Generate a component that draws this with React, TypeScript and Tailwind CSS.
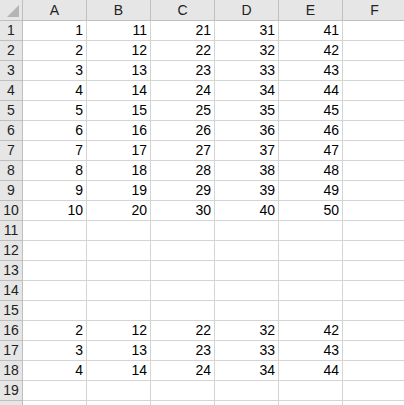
import React from 'react';

const cols = ['A', 'B', 'C', 'D', 'E', 'F'];

// values per row (null = empty row)
const rows: (number[] | null)[] = [];
for (let i = 1; i <= 10; i++) rows.push([i, 10 + i, 20 + i, 30 + i, 40 + i]);
for (let i = 11; i <= 15; i++) rows.push(null);
for (let i = 2; i <= 4; i++) rows.push([i, 10 + i, 20 + i, 30 + i, 40 + i]);
rows.push(null);
rows.push(null);

const App = () => {
  return (
    <div
      className="w-[404px] h-[405px] overflow-hidden bg-white text-[15px] text-black"
      style={{ fontFamily: '"Liberation Sans", Arial, sans-serif' }}
    >
      <div className="grid grid-cols-[23px_64px_64px_64px_64px_64px_64px]">
        {/* Header row */}
        <div className="h-[21px] bg-[#e6e6e6] border-r border-b border-[#bfbfbf] relative">
          <div className="absolute right-[3px] bottom-[3px] w-0 h-0 border-l-[12px] border-l-transparent border-b-[12px] border-b-[#b4b4b4]" />
        </div>
        {cols.map((c) => (
          <div
            key={c}
            className="h-[21px] bg-[#e6e6e6] border-r border-b border-[#bfbfbf] flex items-center justify-center text-[14px] text-[#222]"
          >
            {c}
          </div>
        ))}

        {/* Body rows */}
        {rows.map((vals, r) => (
          <React.Fragment key={r}>
            <div className="h-[20px] bg-[#e6e6e6] border-r border-b border-[#bfbfbf] flex items-center justify-center text-[14px] text-[#222]">
              {r < 19 ? r + 1 : ''}
            </div>
            {cols.map((c, ci) => (
              <div
                key={c}
                className="h-[20px] border-r border-b border-[#d4d4d4] flex items-center justify-end pr-[3px] text-[14px]"
              >
                {vals && ci < 5 ? vals[ci] : ''}
              </div>
            ))}
          </React.Fragment>
        ))}
      </div>
    </div>
  );
};

export default App;
